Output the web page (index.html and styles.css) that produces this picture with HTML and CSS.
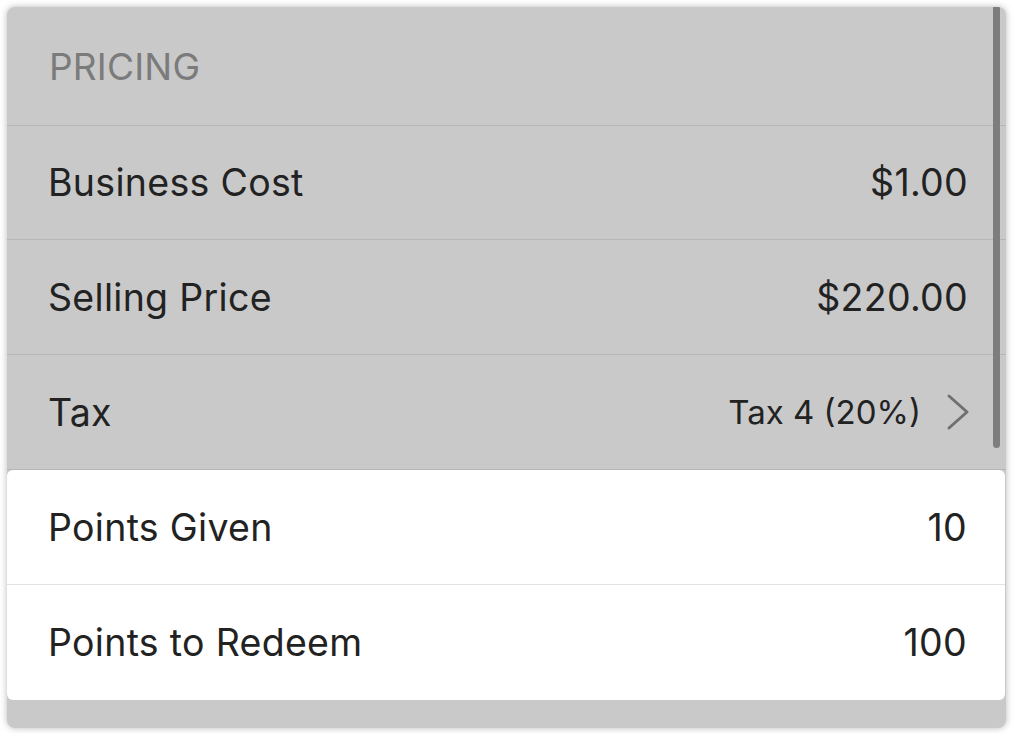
FILE: index.html
```html
<!DOCTYPE html>
<html lang="en">
<head>
    <meta charset="UTF-8">
    <title>Pricing</title>
    <link rel="stylesheet" href="styles.css">
</head>
<body>
    <div class="card">
        <div class="scrollbar"></div>
        <div class="section-title">PRICING</div>
        <div class="row">
            <span class="label">Business Cost</span>
            <span class="value">$1.00</span>
        </div>
        <div class="row tall">
            <span class="label">Selling Price</span>
            <span class="value">$220.00</span>
        </div>
        <div class="row tall tax-row">
            <span class="label">Tax</span>
            <span class="value">Tax 4 (20%)
                <svg class="chevron" width="24" height="38" viewBox="0 0 24 38">
                    <path d="M3 3 L21 19 L3 35" fill="none" stroke="#707070" stroke-width="3" stroke-linecap="round" stroke-linejoin="round"/>
                </svg>
            </span>
        </div>
        <div class="highlight">
            <div class="row tall">
                <span class="label">Points Given</span>
                <span class="value">10</span>
            </div>
            <div class="row tall">
                <span class="label">Points to Redeem</span>
                <span class="value">100</span>
            </div>
        </div>
        <div class="footer-space"></div>
    </div>
</body>
</html>
```

FILE: styles.css
```css
* {
    margin: 0;
    padding: 0;
    box-sizing: border-box;
}

body {
    background: #fff;
    padding: 7px 8px 7px 7px;
    font-family: Inter, "Open Sans", sans-serif;
}

.card {
    position: relative;
    background: #c9c9c9;
    border-radius: 8px;
    box-shadow: 0 0 7px rgba(0,0,0,0.28);
    overflow: hidden;
}

.scrollbar {
    position: absolute;
    top: 0;
    right: 6px;
    width: 7px;
    height: 441px;
    background: #7e7e7e;
    border-radius: 0 0 4px 4px;
}

.section-title {
    height: 119px;
    padding: 0 42px;
    display: flex;
    align-items: center;
    font-size: 37px;
    color: #7b7b7b;
    letter-spacing: 0.2px;
    border-bottom: 1px solid #b6b6b6;
}

.row {
    height: 114px;
    padding: 0 38px 0 41px;
    display: flex;
    align-items: center;
    justify-content: space-between;
    font-size: 37.5px;
    letter-spacing: 0.3px;
    color: #222;
    border-bottom: 1px solid #b6b6b6;
}

.row.tall {
    height: 115px;
}

.value {
    display: flex;
    align-items: center;
}

.chevron {
    margin-left: 25px;
    margin-right: -2px;
}

.tax-row .value {
    font-size: 33px;
    letter-spacing: 0;
}

.highlight {
    background: #fff;
    border-radius: 6px;
    margin-right: 1px;
}

.highlight .row {
    border-bottom: 1px solid #e2e2e2;
}

.highlight .row:last-child {
    border-bottom: none;
}

.footer-space {
    height: 28px;
}
```
